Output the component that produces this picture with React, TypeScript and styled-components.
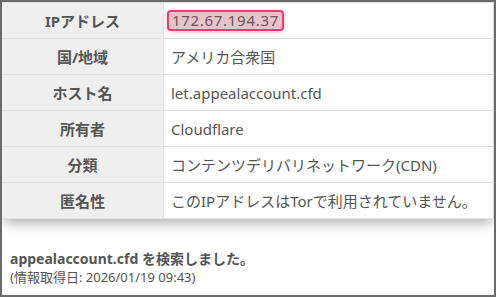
import React from 'react';

import { createGlobalStyle, styled } from 'styled-components';

const GlobalStyle = createGlobalStyle`
  html, body {
    margin: 0;
    padding: 0;
    background: #ffffff;
  }
  body {
    font-family: "Noto Sans", "Noto Sans CJK JP", sans-serif;
    color: #555555;
  }
`;

const Frame = styled.div`
  width: 496px;
  height: 297px;
  box-sizing: border-box;
  border: 2px solid #6b6b6b;
  overflow: hidden;
  background: #ffffff;
`;

const InfoTable = styled.table`
  width: 100%;
  border-collapse: collapse;
  box-shadow: 0 6px 12px -2px rgba(0, 0, 0, 0.32);
  background: #ffffff;
`;

const HeadCell = styled.th`
  width: 161px;
  height: 35px;
  padding: 0;
  background: #efefef;
  border: 1px solid #e2e2e2;
  border-left: none;
  font-size: 15px;
  font-weight: 700;
  color: #555555;
  text-align: center;
  vertical-align: middle;
`;

const ValueCell = styled.td`
  height: 35px;
  padding: 0 0 0 7px;
  border: 1px solid #e2e2e2;
  border-right: 1px solid #d6d6d6;
  font-size: 15px;
  color: #555555;
  vertical-align: middle;
  white-space: nowrap;
`;

const IpBadge = styled.span`
  display: inline-block;
  padding: 1px 3px;
  margin-left: -4px;
  background: #e8c3cc;
  border: 2px solid #ec3d6e;
  border-radius: 4px;
  box-shadow: 0 1px 4px rgba(236, 61, 110, 0.35);
  color: #6f5259;
  font-size: 15px;
  line-height: 15px;
  letter-spacing: 0.7px;
`;

const Footer = styled.div`
  padding: 30px 8px 0 8px;
`;

const SearchedLine = styled.div`
  font-size: 14px;
  font-weight: 700;
  color: #555555;
  line-height: 19px;
`;

const FetchedLine = styled.div`
  font-size: 13px;
  color: #555555;
  line-height: 19px;
`;

const rows: { label: string; value: React.ReactNode }[] = [
  { label: 'IPアドレス', value: <IpBadge>172.67.194.37</IpBadge> },
  { label: '国/地域', value: 'アメリカ合衆国' },
  { label: 'ホスト名', value: 'let.appealaccount.cfd' },
  { label: '所有者', value: 'Cloudflare' },
  { label: '分類', value: 'コンテンツデリバリネットワーク(CDN)' },
  { label: '匿名性', value: 'このIPアドレスはTorで利用されていません。' },
];

export default function App() {
  return (
    <>
      <GlobalStyle />
      <Frame>
        <InfoTable>
          <tbody>
            {rows.map((r) => (
              <tr key={r.label}>
                <HeadCell>{r.label}</HeadCell>
                <ValueCell>{r.value}</ValueCell>
              </tr>
            ))}
          </tbody>
        </InfoTable>
        <Footer>
          <SearchedLine>appealaccount.cfd を検索しました。</SearchedLine>
          <FetchedLine>(情報取得日: 2026/01/19 09:43)</FetchedLine>
        </Footer>
      </Frame>
    </>
  );
}
